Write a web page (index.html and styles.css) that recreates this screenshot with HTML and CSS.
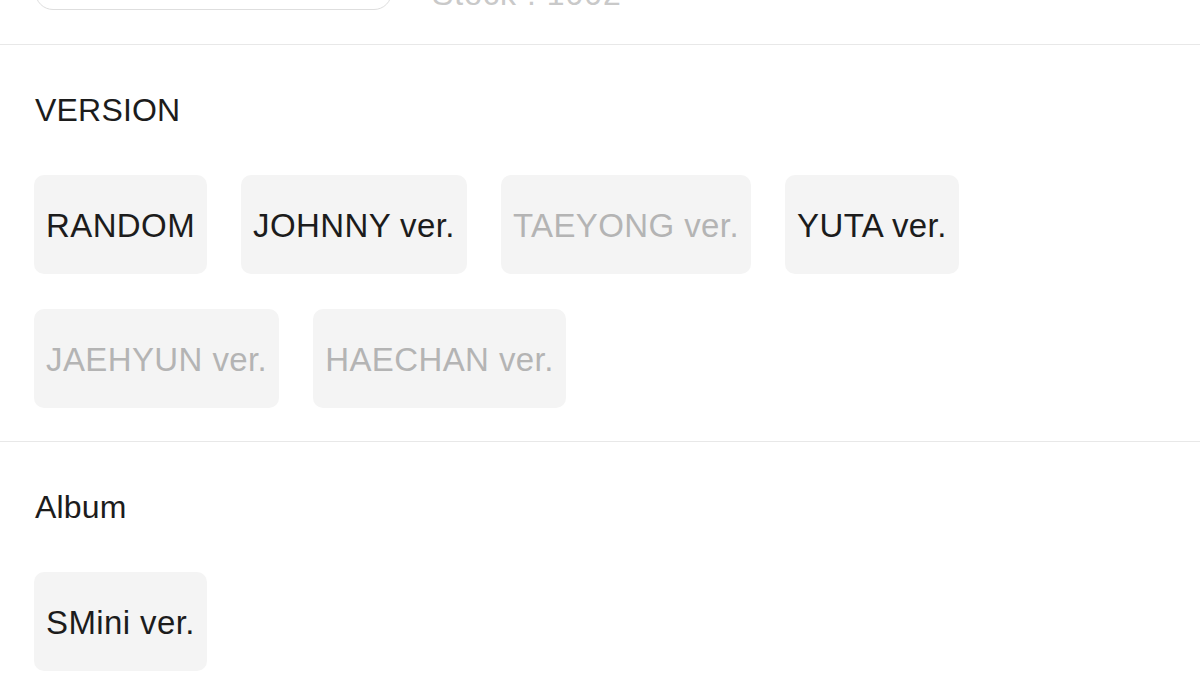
FILE: index.html
```html
<!DOCTYPE html>
<html lang="en">
<head>
<meta charset="utf-8">
<title>Options</title>
<link rel="stylesheet" href="styles.css">
</head>
<body>
<div class="qty-row">
  <div class="qty-box"></div>
  <div class="stock">Stock : 1002</div>
</div>
<div class="divider"></div>
<section class="section">
  <h2 class="section-title">VERSION</h2>
  <div class="options">
    <div class="option">RANDOM</div>
    <div class="option">JOHNNY ver.</div>
    <div class="option disabled">TAEYONG ver.</div>
    <div class="option">YUTA ver.</div>
    <div class="option disabled">JAEHYUN ver.</div>
    <div class="option disabled">HAECHAN ver.</div>
  </div>
</section>
<div class="divider"></div>
<section class="section">
  <h2 class="section-title">Album</h2>
  <div class="options">
    <div class="option">SMini ver.</div>
  </div>
</section>
</body>
</html>
```

FILE: styles.css
```css
html, body {
  margin: 0;
  padding: 0;
  background: #ffffff;
}
body {
  font-family: "Liberation Sans", Arial, Helvetica, sans-serif;
  color: #1c1c1c;
  overflow: hidden;
}
.qty-row {
  display: flex;
  align-items: flex-end;
  gap: 40px;
  padding-left: 35px;
  margin-top: -50px;
  height: 60px;
}
.qty-box {
  width: 357px;
  height: 60px;
  box-sizing: border-box;
  border: 1px solid #dedede;
  border-radius: 18px;
}
.stock {
  font-size: 32px;
  line-height: 1;
  color: #c9c9c9;
  letter-spacing: 1px;
}
.divider {
  height: 1px;
  background: #e8e8e8;
  margin-top: 34px;
}
.section + .divider {
  margin-top: 0;
}
.section {
  padding: 46px 34px 33px;
}
.section-title {
  margin: 0 0 46px;
  padding-left: 1px;
  font-size: 32px;
  line-height: 38px;
  font-weight: normal;
  letter-spacing: 0.2px;
  color: #1c1c1c;
}
.options {
  display: flex;
  flex-wrap: wrap;
  gap: 35px 34px;
}
.option {
  box-sizing: border-box;
  height: 99px;
  padding: 2px 12px 0;
  display: flex;
  align-items: center;
  background: #f4f4f4;
  border-radius: 10px;
  font-size: 33px;
  letter-spacing: 0.4px;
  color: #1c1c1c;
  white-space: nowrap;
}
.option.disabled {
  color: #b4b4b4;
}
```
